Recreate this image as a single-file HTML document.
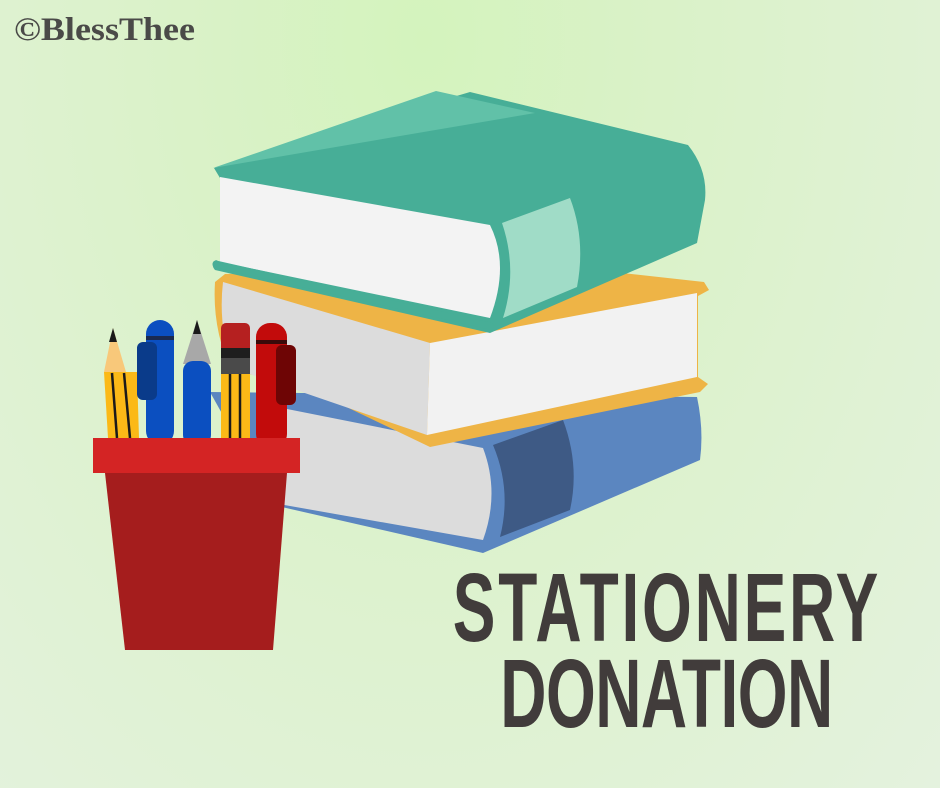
<!DOCTYPE html>
<html><head><meta charset="utf-8"><style>
html,body{margin:0;padding:0;width:940px;height:788px;overflow:hidden}
body{background:radial-gradient(ellipse at 45% 5%,#d4f3bd 0%,#dcf2cc 45%,#e4f2de 100%)}
svg{position:absolute;left:0;top:0}
</style></head><body>
<svg width="940" height="788" viewBox="0 0 940 788" xmlns="http://www.w3.org/2000/svg">
<text x="14" y="40" font-family="Liberation Serif, serif" font-weight="bold" font-size="33" fill="#4a4a48" textLength="181" lengthAdjust="spacingAndGlyphs">©BlessThee</text>

<path d="M210,392 L697,397 Q704,430 700,460 L483,553 L273,505 Z" fill="#5b86c0"/>
<path d="M277,407 L483,448 Q500,493 483,540 L273,503 Z" fill="#dcdcdc"/>
<path d="M493,445 L563,420 Q580,465 570,510 L500,537 Q512,490 493,445 Z" fill="#3e5a85"/>

<path d="M225,274 L540,264 L704,282 L709,290 L698,296 L698,377 L708,384 L700,392 L430,447 L290,380 L232,372 Q212,330 215,282 Z" fill="#eeb446"/>
<path d="M223,282 L430,343 L427,435 L232,368 Q218,325 223,282 Z" fill="#dcdcdc"/>
<path d="M430,343 L697,293 L697,377 L427,435 Z" fill="#f2f2f2"/>

<path d="M214,168 L470,92 L688,145 Q708,170 705,200 L697,243 L490,333 L215,270 Q210,264 216,260 L220,262 L220,178 Z" fill="#47ae97"/>
<path d="M213,168 L436,91 L535,113 Z" fill="#61c1a8"/>
<path d="M220,177 L490,225 Q510,265 490,318 L220,262 Z" fill="#f3f3f3"/>
<path d="M502,223 L570,198 Q586,240 577,287 L503,318 Q518,270 502,223 Z" fill="#a0dcc7"/>
<path d="M216,264 L490,326" stroke="#47ae97" stroke-width="7" stroke-linecap="round"/>

<path d="M104,372 L137,372 L139,438 L108,438 Z" fill="#fbb917"/>
<path d="M104,372 L113,328 L126,372 Z" fill="#f8c87a"/>
<path d="M113,328 L109,342 L117,342 Z" fill="#1a1a1a"/>
<path d="M112,373 L117,438 M124,373 L130,438" stroke="#1a1a1a" stroke-width="2.5"/>
<rect x="146" y="320" width="28" height="125" rx="14" fill="#0b4fc0"/>
<rect x="146" y="336" width="28" height="4" fill="#1a2a50"/>
<rect x="137" y="342" width="20" height="58" rx="6" fill="#0a3b8a"/>
<path d="M197,320 L183,364 L211,364 Z" fill="#a8a8a8"/>
<path d="M197,320 L193,334 L201,334 Z" fill="#1a1a1a"/>
<rect x="183" y="361" width="28" height="84" rx="10" fill="#0b4fc0"/>
<rect x="221" y="323" width="29" height="30" rx="5" fill="#b52020"/>
<rect x="221" y="348" width="29" height="10" fill="#1e1e1e"/>
<rect x="221" y="358" width="29" height="16" fill="#4a4a4a"/>
<rect x="221" y="374" width="29" height="66" fill="#fbb917"/>
<path d="M230,374 L230,440 M240,374 L240,440" stroke="#1a1a1a" stroke-width="2.5"/>
<rect x="256" y="323" width="31" height="125" rx="14" fill="#c20b0b"/>
<rect x="256" y="340" width="31" height="4" fill="#3a0a0a"/>
<rect x="276" y="345" width="20" height="60" rx="6" fill="#6e0505"/>

<path d="M105,473 L287,473 L273,650 L125,650 Z" fill="#a51d1d"/>
<rect x="93" y="438" width="207" height="35" fill="#d42424"/>

<g fill="#413c3b" font-family="Liberation Sans, sans-serif" font-weight="bold" font-size="97">
<text transform="scale(0.66 1)" x="686" y="641" letter-spacing="4.2">STATIONERY</text>
<text transform="scale(0.66 1)" x="758" y="727" letter-spacing="-0.8">DONATION</text>
</g>
</svg>
</body></html>
